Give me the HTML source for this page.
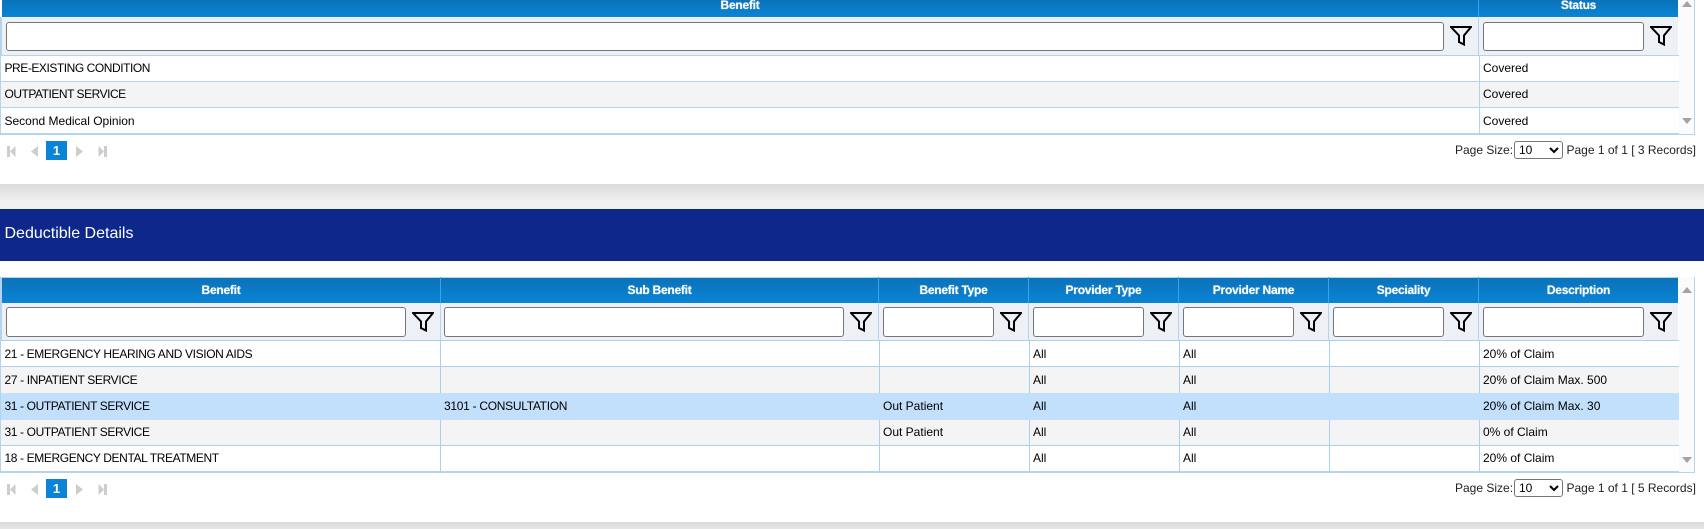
<!DOCTYPE html>
<html lang="en">
<head>
<meta charset="utf-8">
<title>Deductible Details</title>
<style>
html,body{margin:0;padding:0;background:#fff;}
body{position:relative;width:1704px;height:529px;overflow:hidden;font-family:"Liberation Sans",sans-serif;font-size:12px;color:#000;}
div,input,select,svg,span{position:absolute;box-sizing:border-box;}
.hd{background:linear-gradient(#0b72b8,#0a84d6);}
.hs{width:1px;background:#35a4f4;}
.ht{color:#fff;font-weight:bold;text-align:center;line-height:16px;height:16px;font-size:12px;text-shadow:0 0 1px rgba(255,255,255,.7);letter-spacing:-.25px;}
.fr{background:#edf1f5;}
.in{background:#fff;border:1px solid #767676;border-radius:3px;height:30px;padding:0;}
.fn{width:22px;height:20px;}
.ln{height:1px;background:#b4d3ec;}
.vl{width:1px;background:#b4d3ec;}
.t{line-height:16px;height:16px;white-space:nowrap;font-size:12px;}
.ps{white-space:nowrap;line-height:16px;height:16px;color:#222;font-size:12px;}
.pn{background:#0a84d6;color:#fff;font-weight:bold;text-align:center;font-size:13px;line-height:19px;width:21px;height:19px;left:46px;}
.sel{left:1514px;width:49px;height:18px;font-family:"Liberation Sans",sans-serif;font-size:12px;border:1px solid #767676;border-radius:3px;background:#fff;color:#000;padding:0;}
.gap{left:0;width:1704px;}
.sb{left:1679px;width:15px;background:#fbfbfb;}
</style>
</head>
<body>
<svg width="0" height="0" style="left:0;top:0"><defs>
<symbol id="f" viewBox="0 0 22 20"><path d="M1 1H21L14 9.5V18.5L9 16V9.5Z" fill="none" stroke="#000" stroke-width="2"/></symbol>
<symbol id="first" viewBox="0 0 9 11"><path d="M0 0H3V11H0ZM3 5.5L8.5 0V11Z" fill="#cdcdcd"/></symbol>
<symbol id="prev" viewBox="0 0 9 11"><path d="M8 0V11L1 5.5Z" fill="#cdcdcd"/></symbol>
<symbol id="next" viewBox="0 0 9 11"><path d="M1 0V11L8 5.5Z" fill="#cdcdcd"/></symbol>
<symbol id="last" viewBox="0 0 9 11"><path d="M9 0H6V11H9ZM6 5.5L.5 0V11Z" fill="#cdcdcd"/></symbol>
</defs></svg>

<!-- Top grid -->
<div style="left:0;top:17px;width:2px;height:39px;background:#b4d3ec"></div>
<div class="hd" style="left:2px;top:0;width:1676px;height:17px"></div>
<div class="hs" style="left:1478px;top:0;height:17px"></div>
<div class="ht" style="left:2px;top:-3px;width:1476px">Benefit</div>
<div class="ht" style="left:1479px;top:-3px;width:199px">Status</div>
<div class="fr" style="left:2px;top:17px;width:1676px;height:38px"></div>
<div class="vl" style="left:1478px;top:17px;height:38px"></div>
<input class="in" style="left:6px;top:22px;width:1438px;height:29px" aria-label="Benefit filter">
<svg class="fn" style="left:1450px;top:26px"><use href="#f"/></svg>
<input class="in" style="left:1483px;top:22px;width:161px;height:29px" aria-label="Status filter">
<svg class="fn" style="left:1650px;top:26px"><use href="#f"/></svg>

<div style="left:1px;top:82px;width:1678px;height:25px;background:#f4f4f4"></div>
<div class="ln" style="left:0;top:55px;width:1679px"></div>
<div class="ln" style="left:0;top:81px;width:1679px"></div>
<div class="ln" style="left:0;top:107px;width:1679px"></div>
<div style="left:0;top:133px;width:1679px;height:2px;background:#b4d3ec"></div>
<div class="vl" style="left:0;top:55px;height:80px"></div>
<div class="vl" style="left:1479px;top:56px;height:78px"></div>
<div class="t" style="left:4.5px;top:60px;letter-spacing:-.45px">PRE-EXISTING CONDITION</div>
<div class="t" style="left:4.5px;top:86px;letter-spacing:-.48px">OUTPATIENT SERVICE</div>
<div class="t" style="left:4.5px;top:113px">Second Medical Opinion</div>
<div class="t" style="left:1483px;top:60px">Covered</div>
<div class="t" style="left:1483px;top:86px">Covered</div>
<div class="t" style="left:1483px;top:113px">Covered</div>

<div class="sb" style="top:0;height:134px"></div>
<div class="vl" style="left:1694px;top:0;height:135px"></div>
<div class="ln" style="left:1679px;top:134px;width:16px"></div>
<svg style="left:1682px;top:1px;width:10px;height:6px"><path d="M0 6H10L5 0Z" fill="#a3a3a3"/></svg>
<svg style="left:1682px;top:118px;width:10px;height:6px"><path d="M0 0H10L5 6Z" fill="#a3a3a3"/></svg>

<svg style="left:7px;top:146px;width:9px;height:11px"><use href="#first"/></svg>
<svg style="left:30px;top:146px;width:9px;height:11px"><use href="#prev"/></svg>
<div class="pn" style="top:141px">1</div>
<svg style="left:75px;top:146px;width:9px;height:11px"><use href="#next"/></svg>
<svg style="left:98px;top:146px;width:9px;height:11px"><use href="#last"/></svg>
<div class="ps" style="left:1455px;top:142px">Page Size:</div>
<select class="sel" style="top:141px" aria-label="Page size"><option>10</option></select>
<div class="ps" style="left:1566.5px;top:142px;width:128px;text-align:right">Page 1 of 1 [ 3 Records]</div>

<!-- Separator and title -->
<div class="gap" style="top:184px;height:25px;background:linear-gradient(#dadada,#f1f1f1 70%,#f1f1f1)"></div>
<div class="gap" style="top:209px;height:52px;background:#0d278a"></div>
<div style="left:4.5px;top:224px;color:#fff;font-size:16px;line-height:20px;height:20px;white-space:nowrap">Deductible Details</div>

<!-- Bottom grid -->
<div style="left:0;top:277px;width:1679px;height:1px;background:#b4d3ec"></div>
<div style="left:0;top:277px;width:2px;height:64px;background:#b4d3ec"></div>
<div class="hd" style="left:2px;top:278px;width:1676px;height:25px"></div>
<div class="hs" style="left:440px;top:277px;height:26px"></div>
<div class="hs" style="left:878px;top:277px;height:26px"></div>
<div class="hs" style="left:1028px;top:277px;height:26px"></div>
<div class="hs" style="left:1178px;top:277px;height:26px"></div>
<div class="hs" style="left:1328px;top:277px;height:26px"></div>
<div class="hs" style="left:1478px;top:277px;height:26px"></div>
<div class="ht" style="left:2px;top:282px;width:438px">Benefit</div>
<div class="ht" style="left:441px;top:282px;width:437px">Sub Benefit</div>
<div class="ht" style="left:879px;top:282px;width:149px">Benefit Type</div>
<div class="ht" style="left:1029px;top:282px;width:149px">Provider Type</div>
<div class="ht" style="left:1179px;top:282px;width:149px">Provider Name</div>
<div class="ht" style="left:1329px;top:282px;width:149px">Speciality</div>
<div class="ht" style="left:1479px;top:282px;width:199px">Description</div>

<div class="fr" style="left:2px;top:303px;width:1676px;height:37px"></div>
<div class="vl" style="left:440px;top:303px;height:37px"></div>
<div class="vl" style="left:878px;top:303px;height:37px"></div>
<div class="vl" style="left:1028px;top:303px;height:37px"></div>
<div class="vl" style="left:1178px;top:303px;height:37px"></div>
<div class="vl" style="left:1328px;top:303px;height:37px"></div>
<div class="vl" style="left:1478px;top:303px;height:37px"></div>
<input class="in" style="left:6px;top:307px;width:400px" aria-label="Benefit filter">
<svg class="fn" style="left:412px;top:312px"><use href="#f"/></svg>
<input class="in" style="left:444px;top:307px;width:400px" aria-label="Sub Benefit filter">
<svg class="fn" style="left:850px;top:312px"><use href="#f"/></svg>
<input class="in" style="left:883px;top:307px;width:111px" aria-label="Benefit Type filter">
<svg class="fn" style="left:1000px;top:312px"><use href="#f"/></svg>
<input class="in" style="left:1033px;top:307px;width:111px" aria-label="Provider Type filter">
<svg class="fn" style="left:1150px;top:312px"><use href="#f"/></svg>
<input class="in" style="left:1183px;top:307px;width:111px" aria-label="Provider Name filter">
<svg class="fn" style="left:1300px;top:312px"><use href="#f"/></svg>
<input class="in" style="left:1333px;top:307px;width:111px" aria-label="Speciality filter">
<svg class="fn" style="left:1450px;top:312px"><use href="#f"/></svg>
<input class="in" style="left:1483px;top:307px;width:161px" aria-label="Description filter">
<svg class="fn" style="left:1650px;top:312px"><use href="#f"/></svg>

<div style="left:1px;top:367px;width:1678px;height:26px;background:#f4f4f4"></div>
<div style="left:1px;top:420px;width:1678px;height:25px;background:#f4f4f4"></div>
<div class="ln" style="left:0;top:340px;width:1679px;background:#a8d0f0"></div>
<div class="ln" style="left:0;top:366px;width:1679px;background:#a8d0f0"></div>
<div class="ln" style="left:0;top:445px;width:1679px;background:#a8d0f0"></div>
<div style="left:0;top:471px;width:1679px;height:2px;background:#b4d3ec"></div>
<div class="vl" style="left:0;top:340px;height:133px"></div>
<div class="vl" style="left:440px;top:341px;height:131px;background:#a8d0f0"></div>
<div class="vl" style="left:879px;top:341px;height:131px;background:#a8d0f0"></div>
<div class="vl" style="left:1029px;top:341px;height:131px;background:#a8d0f0"></div>
<div class="vl" style="left:1179px;top:341px;height:131px;background:#a8d0f0"></div>
<div class="vl" style="left:1329px;top:341px;height:131px;background:#a8d0f0"></div>
<div class="vl" style="left:1479px;top:341px;height:131px;background:#a8d0f0"></div>
<div style="left:1px;top:393px;width:1678px;height:27px;background:#c2dffb"></div>

<div class="t" style="left:4.5px;top:346px;letter-spacing:-.37px">21 - EMERGENCY HEARING AND VISION AIDS</div>
<div class="t" style="left:1033px;top:346px">All</div>
<div class="t" style="left:1183px;top:346px">All</div>
<div class="t" style="left:1483px;top:346px">20% of Claim</div>

<div class="t" style="left:4.5px;top:372px;letter-spacing:-.35px">27 - INPATIENT SERVICE</div>
<div class="t" style="left:1033px;top:372px">All</div>
<div class="t" style="left:1183px;top:372px">All</div>
<div class="t" style="left:1483px;top:372px">20% of Claim Max. 500</div>

<div class="t" style="left:4.5px;top:398px;letter-spacing:-.38px">31 - OUTPATIENT SERVICE</div>
<div class="t" style="left:444px;top:398px;letter-spacing:-.29px">3101 - CONSULTATION</div>
<div class="t" style="left:883px;top:398px">Out Patient</div>
<div class="t" style="left:1033px;top:398px">All</div>
<div class="t" style="left:1183px;top:398px">All</div>
<div class="t" style="left:1483px;top:398px">20% of Claim Max. 30</div>

<div class="t" style="left:4.5px;top:424px;letter-spacing:-.38px">31 - OUTPATIENT SERVICE</div>
<div class="t" style="left:883px;top:424px">Out Patient</div>
<div class="t" style="left:1033px;top:424px">All</div>
<div class="t" style="left:1183px;top:424px">All</div>
<div class="t" style="left:1483px;top:424px">0% of Claim</div>

<div class="t" style="left:4.5px;top:450px;letter-spacing:-.38px">18 - EMERGENCY DENTAL TREATMENT</div>
<div class="t" style="left:1033px;top:450px">All</div>
<div class="t" style="left:1183px;top:450px">All</div>
<div class="t" style="left:1483px;top:450px">20% of Claim</div>

<div class="sb" style="top:277px;height:195px"></div>
<div class="vl" style="left:1694px;top:277px;height:196px"></div>
<div class="ln" style="left:1679px;top:472px;width:16px"></div>
<svg style="left:1682px;top:287px;width:10px;height:6px"><path d="M0 6H10L5 0Z" fill="#a3a3a3"/></svg>
<svg style="left:1682px;top:457px;width:10px;height:6px"><path d="M0 0H10L5 6Z" fill="#a3a3a3"/></svg>

<svg style="left:7px;top:484px;width:9px;height:11px"><use href="#first"/></svg>
<svg style="left:30px;top:484px;width:9px;height:11px"><use href="#prev"/></svg>
<div class="pn" style="top:479px">1</div>
<svg style="left:75px;top:484px;width:9px;height:11px"><use href="#next"/></svg>
<svg style="left:98px;top:484px;width:9px;height:11px"><use href="#last"/></svg>
<div class="ps" style="left:1455px;top:480px">Page Size:</div>
<select class="sel" style="top:479px" aria-label="Page size"><option>10</option></select>
<div class="ps" style="left:1566.5px;top:480px;width:128px;text-align:right">Page 1 of 1 [ 5 Records]</div>

<div class="gap" style="top:522px;height:7px;background:linear-gradient(#dadada,#e6e6e6)"></div>
</body>
</html>
